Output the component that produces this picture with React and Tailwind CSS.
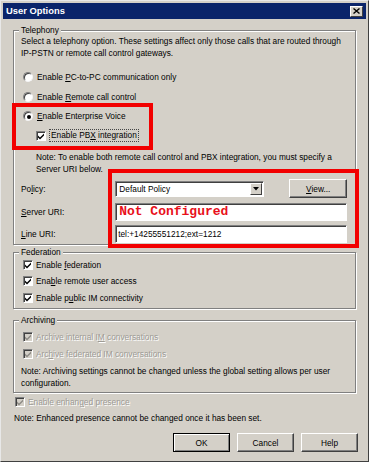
import React from 'react';

const font = { fontFamily: '"Liberation Sans", Arial, sans-serif' };

function U({ children }) {
  return <span className="underline underline-offset-1">{children}</span>;
}

function Radio({ checked }) {
  return (
    <span className="relative inline-block w-[10px] h-[10px] shrink-0 rounded-full bg-white border border-t-[#808080] border-l-[#808080] border-r-[#f4f4f4] border-b-[#f4f4f4] shadow-[inset_1px_1px_0_#404040]">
      {checked && <span className="absolute left-[2.5px] top-[2.5px] w-[4px] h-[4px] rounded-full bg-black" />}
    </span>
  );
}

function Check({ checked, disabled }) {
  return (
    <span
      className={
        'flex items-center justify-center w-[10px] h-[10px] shrink-0 border border-t-[#808080] border-l-[#808080] border-r-white border-b-white shadow-[inset_1px_1px_0_#404040] ' +
        (disabled ? 'bg-[#d4d0c8]' : 'bg-white')
      }
    >
      {checked && (
        <svg width="8" height="8" viewBox="0 0 8 8">
          <path d="M1 3.5 L3 5.5 L7 1.5 L7 3.5 L3 7.5 L1 5.5 Z" fill={disabled ? '#8c8a84' : '#000'} />
        </svg>
      )}
    </span>
  );
}

function Group({ title, className, children }) {
  return (
    <div className={'relative mx-[12px] border border-[#808080] shadow-[inset_1px_1px_0_#fff,1px_1px_0_#fff] ' + className}>
      <span className="absolute -top-[7px] left-[5px] px-[2px] bg-[#d4d0c8] leading-[12px]">{title}</span>
      {children}
    </div>
  );
}

function Button({ children, def, className }) {
  return (
    <div
      className={
        'flex items-center justify-center h-[19px] bg-[#d4d0c8] border ' +
        (def
          ? 'border-black shadow-[inset_1px_1px_0_#fff,inset_-1px_-1px_0_#808080] '
          : 'border-t-white border-l-white border-r-[#404040] border-b-[#404040] shadow-[inset_-1px_-1px_0_#808080] ') +
        className
      }
    >
      {children}
    </div>
  );
}

const disabledText = 'text-[#9d9b95] [text-shadow:1px_1px_0_#fff]';

export default function App() {
  return (
    <div style={font} className="relative w-[369px] h-[462px] bg-[#d4d0c8] text-black text-[8.3px] leading-[12px] whitespace-nowrap border border-t-[#e8e8e8] border-l-[#e8e8e8] border-r-[#404040] border-b-[#404040] overflow-hidden">
      <div className="mx-[2px] mt-[2px] h-[16px] bg-[#0a246a] flex items-center justify-between pl-[3px] pr-[3px]">
        <span className="text-white font-bold text-[9.4px]">User Options</span>
        <span className="flex items-center justify-center w-[13px] h-[11px] bg-[#d4d0c8] border border-t-white border-l-white border-r-[#404040] border-b-[#404040]">
          <svg width="7" height="6" viewBox="0 0 7 6">
            <path d="M0.5 0.5 L6.5 5.5 M6.5 0.5 L0.5 5.5" stroke="#000" strokeWidth="1.4" />
          </svg>
        </span>
      </div>

      <Group title="Telephony" className="mt-[11px] h-[215px] pl-[7px] pr-[8px] pt-[4px]">
        <div>Select a telephony option. These settings affect only those calls that are routed through</div>
        <div>IP-PSTN or remote call control gateways.</div>
        <div className="mt-[12px] flex items-center gap-[4px] pl-[2px]">
          <Radio />
          <span>Enable <U>P</U>C-to-PC communication only</span>
        </div>
        <div className="mt-[8px] flex items-center gap-[4px] pl-[2px]">
          <Radio />
          <span>Enable <U>R</U>emote call control</span>
        </div>
        <div className="mt-[7px] flex items-center gap-[4px] pl-[2px]">
          <Radio checked />
          <span><U>E</U>nable Enterprise Voice</span>
        </div>
        <div className="mt-[7px] flex items-center gap-[3px] pl-[15px]">
          <Check checked />
          <span className="border border-dotted border-[#444] px-[1px] leading-[11px]">Enable PB<U>X</U> integration</span>
        </div>
        <div className="mt-[9px] pl-[15px]">
          <div>Note: To enable both remote call control and PBX integration, you must specify a</div>
          <div>Server URI below.</div>
        </div>
        <div className="mt-[4px] flex items-center">
          <span className="w-[95px]">Po<U>l</U>icy:</span>
          <div className="flex items-center justify-between w-[150px] h-[16px] bg-white border border-t-[#808080] border-l-[#808080] border-r-white border-b-white shadow-[inset_1px_1px_0_#404040] pl-[3px] pr-[1px]">
            <span>Default Policy</span>
            <span className="flex items-center justify-center w-[12px] h-[12px] bg-[#d4d0c8] border border-t-white border-l-white border-r-[#404040] border-b-[#404040]">
              <svg width="6" height="4" viewBox="0 0 6 4">
                <path d="M0 0 H6 L3 3.5 Z" fill="#000" />
              </svg>
            </span>
          </div>
          <Button className="ml-[25px] w-[58px] h-[17px]"><span><U>V</U>iew...</span></Button>
        </div>
        <div className="mt-[5px] flex items-center">
          <span className="w-[95px]"><U>S</U>erver URI:</span>
          <div className="flex items-center w-[234px] h-[18px] bg-white border border-t-[#808080] border-l-[#808080] border-r-white border-b-white shadow-[inset_1px_1px_0_#404040] pl-[3px]">
            <span className="text-[#e8101a] font-bold text-[13px]" style={{ fontFamily: '"Liberation Mono", "Courier New", monospace' }}>Not Configured</span>
          </div>
        </div>
        <div className="mt-[4px] flex items-center">
          <span className="w-[95px]"><U>L</U>ine URI:</span>
          <div className="flex items-center w-[234px] h-[18px] bg-white border border-t-[#808080] border-l-[#808080] border-r-white border-b-white shadow-[inset_1px_1px_0_#404040] pl-[2px]">
            <span>tel:+14255551212;ext=1212</span>
          </div>
        </div>
      </Group>

      <Group title="Federation" className="mt-[7px] h-[57px] pl-[9px] pt-[6px]">
        <div className="flex items-center gap-[3px]">
          <Check checked />
          <span>Enable <U>f</U>ederation</span>
        </div>
        <div className="mt-[4px] flex items-center gap-[3px]">
          <Check checked />
          <span>Ena<U>b</U>le remote user access</span>
        </div>
        <div className="mt-[5px] flex items-center gap-[3px]">
          <Check checked />
          <span>Enable p<U>u</U>blic IM connectivity</span>
        </div>
      </Group>

      <Group title="Archiving" className="mt-[11px] h-[73px] pl-[7px] pt-[10px]">
        <div className="flex items-center gap-[3px] pl-[2px]">
          <Check checked disabled />
          <span className={disabledText}>Archive internal I<U>M</U> conversations</span>
        </div>
        <div className="mt-[5px] flex items-center gap-[3px] pl-[2px]">
          <Check checked disabled />
          <span className={disabledText}>Arc<U>h</U>ive federated IM conversations</span>
        </div>
        <div className="mt-[5px]">
          <div>Note: Archiving settings cannot be changed unless the global setting allows per user</div>
          <div>configuration.</div>
        </div>
      </Group>

      <div className="mt-[3px] ml-[14px] flex items-center gap-[3px]">
        <Check checked disabled />
        <span className={disabledText}>Enable enhan<U>g</U>ed presence</span>
      </div>
      <div className="mt-[4px] ml-[13px]">Note: Enhanced presence cannot be changed once it has been set.</div>

      <div className="mt-[9px] mr-[10px] flex justify-end gap-[7px]">
        <Button def className="w-[57px]">OK</Button>
        <Button className="w-[57px]">Cancel</Button>
        <Button className="w-[57px]">Help</Button>
      </div>

      <div className="absolute left-[11px] top-[102px] w-[141px] h-[47px] border-[4px] border-[#f20000]" />
      <div className="absolute left-[107px] top-[168px] w-[251px] h-[79px] border-[4px] border-[#f20000]" />
    </div>
  );
}
